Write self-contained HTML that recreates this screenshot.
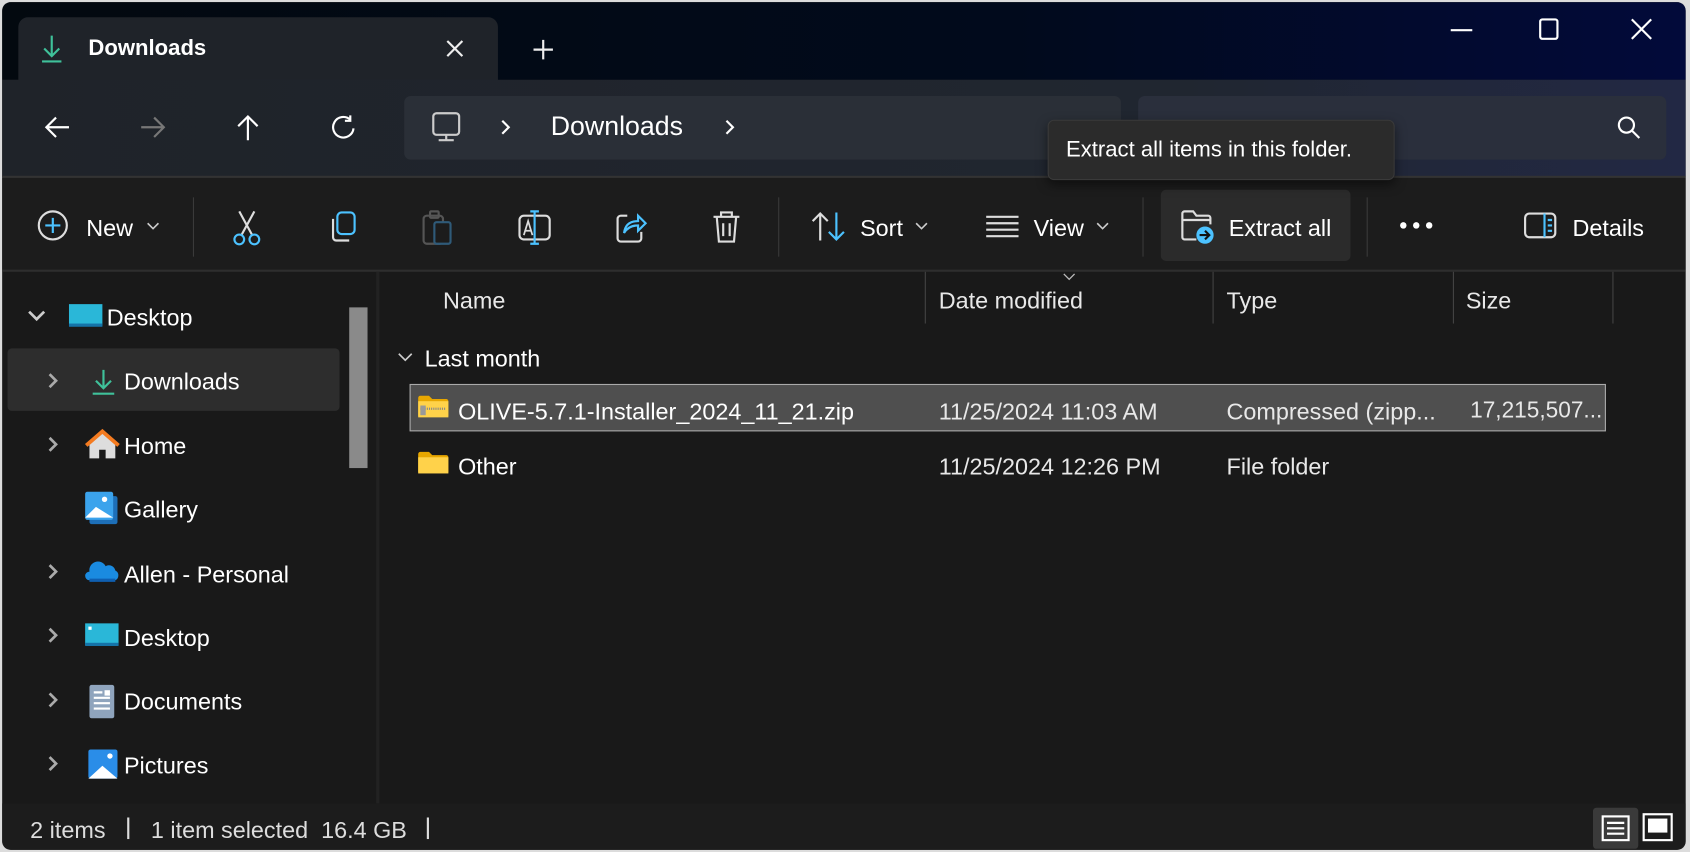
<!DOCTYPE html>
<html><head><meta charset="utf-8"><style>
*{margin:0;padding:0;box-sizing:border-box}
html,body{width:1690px;height:852px;overflow:hidden;background:#dcdcdc;font-family:"Liberation Sans",sans-serif;color:#fff}
#w{position:absolute;left:0;top:0;width:1568px;height:790px;transform:scale(1.07781,1.07848);transform-origin:0 0}
.a{position:absolute}
.t{position:absolute;font-size:21.7px;white-space:nowrap;color:#fff}
svg{position:absolute;overflow:visible}
</style></head><body><div id="w">
<div class="a" style="left:2px;top:2px;width:1562px;height:786px;border-radius:8px;background:#191919;overflow:hidden">
 <div class="a" style="left:0;top:0;width:1562px;height:72px;background:linear-gradient(90deg,#03090f,#010a1c 60%,#020a3a)"></div>
 <div class="a" style="left:15px;top:14px;width:445px;height:62px;background:#1f2329;border-radius:9px 9px 0 0"></div>
 <div class="a" style="left:0;top:72px;width:1562px;height:90px;background:linear-gradient(90deg,#1f2329,#202630 70%,#222844)"></div>
 <div class="a" style="left:373px;top:87px;width:665px;height:59px;background:#2a2f37;border-radius:6px"></div>
 <div class="a" style="left:1054px;top:87px;width:490px;height:59px;background:#2a2f3c;border-radius:6px"></div>
 <div class="a" style="left:0;top:161px;width:1562px;height:2px;background:#333"></div>
 <div class="a" style="left:0;top:163px;width:1562px;height:85px;background:#1c1c1c"></div>
 <div class="a" style="left:0;top:248px;width:1562px;height:2px;background:#2e2e2e"></div>
 <div class="a" style="left:347px;top:250px;width:3px;height:493px;background:#222"></div>
 <div class="a" style="left:5px;top:321px;width:308px;height:58px;background:#2d2d2d;border-radius:4px"></div>
 <div class="a" style="left:322px;top:283px;width:17px;height:149px;background:#8a8a8a"></div>
 <div class="a" style="left:0;top:743px;width:1562px;height:43px;background:#1c1c1c"></div>
 <div class="a" style="left:1075px;top:174px;width:176px;height:66px;background:#2b2b2b;border-radius:5px"></div>
 <div class="a" style="left:378px;top:354px;width:1110px;height:44px;background:#4f4f4f;border:1px solid #aaa"></div>
</div>
<!-- tab -->
<svg style="left:36px;top:31px" width="24" height="28"><path d="M12 2v19M5 14l7 7 7-7" stroke="#3fc19a" stroke-width="2" fill="none"/><path d="M3 26h18" stroke="#3fc19a" stroke-width="2"/></svg>
<div class="t" style="left:82px;top:33px;font-weight:600;font-size:20.5px">Downloads</div>
<svg style="left:413px;top:36px" width="18" height="18"><path d="M2 2l14 14M16 2L2 16" stroke="#eee" stroke-width="2"/></svg>
<svg style="left:494px;top:36px" width="20" height="20"><path d="M10 1v18M1 10h18" stroke="#eee" stroke-width="2"/></svg>
<svg style="left:1346px;top:26px" width="20" height="4"><path d="M0 2h20" stroke="#fff" stroke-width="2"/></svg>
<svg style="left:1428px;top:17px" width="18" height="20"><rect x="1" y="1" width="16" height="18" rx="2" stroke="#fff" stroke-width="2" fill="none"/></svg>
<svg style="left:1513px;top:17px" width="20" height="20"><path d="M1 1l18 18M19 1L1 19" stroke="#fff" stroke-width="2"/></svg>
<!-- nav -->
<svg style="left:40px;top:107px" width="26" height="22"><path d="M24 11H3M12 2L3 11l9 9" stroke="#fff" stroke-width="2" fill="none"/></svg>
<svg style="left:129px;top:107px" width="26" height="22"><path d="M2 11h21M14 2l9 9-9 9" stroke="#777" stroke-width="2" fill="none"/></svg>
<svg style="left:218px;top:105px" width="24" height="26"><path d="M12 25V3M3 12l9-9 9 9" stroke="#fff" stroke-width="2" fill="none"/></svg>
<svg style="left:307px;top:106px" width="24" height="24"><path d="M18 5A9.5 9.5 0 1 0 21 13" stroke="#fff" stroke-width="2" fill="none"/><path d="M18 1v5h-5" stroke="#fff" stroke-width="2" fill="none"/></svg>
<svg style="left:400px;top:103px" width="28" height="30"><rect x="2" y="2" width="24" height="20" rx="3" stroke="#ccc" stroke-width="2" fill="none"/><path d="M14 22v4M7 27h14" stroke="#ccc" stroke-width="2"/></svg>
<svg style="left:464px;top:110px" width="10" height="16"><path d="M2 2l6 6-6 6" stroke="#fff" stroke-width="2" fill="none"/></svg>
<div class="t" style="left:511px;top:104px;font-size:24.8px">Downloads</div>
<svg style="left:672px;top:110px" width="10" height="16"><path d="M2 2l6 6-6 6" stroke="#fff" stroke-width="2" fill="none"/></svg>
<svg style="left:1500px;top:107px" width="24" height="24"><circle cx="9" cy="9" r="7" stroke="#fff" stroke-width="2" fill="none"/><path d="M14 14l7 7" stroke="#fff" stroke-width="2"/></svg>
<!-- tooltip -->
<div class="a" style="left:972px;top:111px;width:322px;height:56px;background:#2b2b2b;border:1px solid #3a3a3a;border-radius:6px;box-shadow:0 4px 10px rgba(0,0,0,.5)"></div>
<div class="t" style="left:989px;top:127px;font-size:20.5px">Extract all items in this folder.</div>
<!-- toolbar -->
<svg style="left:35px;top:195px" width="30" height="30"><circle cx="14" cy="14" r="13" stroke="#ddd" stroke-width="2" fill="none"/><path d="M14 7v14M7 14h14" stroke="#4cc2ff" stroke-width="2"/></svg>
<div class="t" style="left:80px;top:199px">New</div>
<svg style="left:136px;top:206px" width="12" height="8"><path d="M1 1l5 5 5-5" stroke="#ccc" stroke-width="1.5" fill="none"/></svg>
<div class="a" style="left:179px;top:183px;width:1px;height:55px;background:#3a3a3a"></div>
<div class="a" style="left:722px;top:183px;width:1px;height:55px;background:#3a3a3a"></div>
<div class="a" style="left:1060px;top:183px;width:1px;height:55px;background:#3a3a3a"></div>
<div class="a" style="left:1268px;top:183px;width:1px;height:55px;background:#3a3a3a"></div>
<svg style="left:214px;top:194px" width="30" height="34"><path d="M8 2l12 22M22 2L10 24" stroke="#ddd" stroke-width="2"/><circle cx="8" cy="28" r="4.5" stroke="#4cc2ff" stroke-width="2" fill="none"/><circle cx="22" cy="28" r="4.5" stroke="#4cc2ff" stroke-width="2" fill="none"/></svg>
<svg style="left:303px;top:195px" width="30" height="32"><rect x="10" y="2" width="16" height="20" rx="4" stroke="#4cc2ff" stroke-width="2" fill="none"/><path d="M6 8v17a3 3 0 0 0 3 3h12" stroke="#ddd" stroke-width="2" fill="none"/></svg>
<svg style="left:391px;top:194px" width="30" height="34"><rect x="2" y="6" width="18" height="26" rx="3" stroke="#555" stroke-width="2" fill="none"/><rect x="8" y="2" width="8" height="6" rx="1" stroke="#555" stroke-width="2" fill="none"/><rect x="12" y="12" width="15" height="20" rx="2" stroke="#2f5a78" stroke-width="2" fill="#1c1c1c"/></svg>
<svg style="left:480px;top:194px" width="32" height="34"><rect x="2" y="6" width="28" height="22" rx="4" stroke="#ddd" stroke-width="2" fill="none"/><path d="M16 2v30M12 2h8M12 32h8" stroke="#4cc2ff" stroke-width="2"/><path d="M6 24l4-13 4 13M7 20h6" stroke="#ddd" stroke-width="1.6" fill="none"/></svg>
<svg style="left:570px;top:194px" width="32" height="34"><path d="M12 6H6a3 3 0 0 0-3 3v18a3 3 0 0 0 3 3h16a3 3 0 0 0 3-3v-6" stroke="#ddd" stroke-width="2" fill="none"/><path d="M9 22c1-8 6-11 13-11V6l7 7-7 7v-5c-6 0-10 2-13 7z" stroke="#4cc2ff" stroke-width="2" fill="none"/></svg>
<svg style="left:660px;top:194px" width="28" height="34"><path d="M2 7h24M9 7V3h10v4M5 7l2 23h14l2-23M11 13v12M17 13v12" stroke="#ddd" stroke-width="2" fill="none"/></svg>
<svg style="left:752px;top:195px" width="34" height="30"><path d="M9 28V3M2 10l7-7 7 7" stroke="#ddd" stroke-width="2" fill="none"/><path d="M24 2v25M17 20l7 7 7-7" stroke="#4cc2ff" stroke-width="2" fill="none"/></svg>
<div class="t" style="left:798px;top:199px">Sort</div>
<svg style="left:849px;top:206px" width="12" height="8"><path d="M1 1l5 5 5-5" stroke="#ccc" stroke-width="1.5" fill="none"/></svg>
<svg style="left:914px;top:199px" width="32" height="22"><path d="M1 2h30M1 8h30M1 14h30M1 20h30" stroke="#ddd" stroke-width="2"/></svg>
<div class="t" style="left:959px;top:199px">View</div>
<svg style="left:1017px;top:206px" width="12" height="8"><path d="M1 1l5 5 5-5" stroke="#ccc" stroke-width="1.5" fill="none"/></svg>
<svg style="left:1095px;top:194px" width="34" height="34"><path d="M15 28H4a2 2 0 0 1-2-2V4a2 2 0 0 1 2-2h8l3 4h11a2 2 0 0 1 2 2v6" stroke="#ddd" stroke-width="2" fill="none"/><path d="M2 10h26" stroke="#ddd" stroke-width="2"/><circle cx="23" cy="24" r="8" fill="#4cc2ff"/><path d="M18 24h9M23 20l4 4-4 4" stroke="#111" stroke-width="2" fill="none"/></svg>
<div class="t" style="left:1140px;top:199px">Extract all</div>
<svg style="left:1298px;top:205px" width="34" height="8"><circle cx="4" cy="4" r="3" fill="#fff"/><circle cx="16" cy="4" r="3" fill="#fff"/><circle cx="28" cy="4" r="3" fill="#fff"/></svg>
<svg style="left:1413px;top:196px" width="32" height="28"><rect x="2" y="2" width="28" height="22" rx="4" stroke="#ddd" stroke-width="2" fill="none"/><path d="M20 2v22M23 8h4M23 13h4M23 18h4" stroke="#4cc2ff" stroke-width="2"/></svg>
<div class="t" style="left:1459px;top:199px">Details</div>
<!-- headers -->
<div class="t" style="left:411px;top:266px;color:#e8e8e8">Name</div>
<div class="a" style="left:858px;top:252px;width:1px;height:48px;background:#444"></div>
<svg style="left:986px;top:253px" width="12" height="8"><path d="M1 1l5 5 5-5" stroke="#bbb" stroke-width="1.2" fill="none"/></svg>
<div class="t" style="left:871px;top:266px;color:#e8e8e8">Date modified</div>
<div class="a" style="left:1125px;top:252px;width:1px;height:48px;background:#444"></div>
<div class="t" style="left:1138px;top:266px;color:#e8e8e8">Type</div>
<div class="a" style="left:1348px;top:252px;width:1px;height:48px;background:#444"></div>
<div class="t" style="left:1360px;top:266px;color:#e8e8e8">Size</div>
<div class="a" style="left:1496px;top:252px;width:1px;height:48px;background:#444"></div>
<svg style="left:369px;top:327px" width="14" height="10"><path d="M1 1l6 6 6-6" stroke="#ccc" stroke-width="1.5" fill="none"/></svg>
<div class="t" style="left:394px;top:320px">Last month</div>
<svg style="left:388px;top:366px" width="28" height="22"><path d="M0 3a2 2 0 0 1 2-2h8l3 3h13a2 2 0 0 1 2 2v14H0z" fill="#e8a700"/><rect x="0" y="6" width="28" height="15" fill="#ffd24a"/><path d="M2 13h24" stroke="#888" stroke-width="2" stroke-dasharray="1 1"/><rect x="2" y="10" width="5" height="9" fill="#999"/></svg>
<div class="t" style="left:425px;top:369px">OLIVE-5.7.1-Installer_2024_11_21.zip</div>
<div class="t" style="left:871px;top:369px;color:#e8e8e8">11/25/2024 11:03 AM</div>
<div class="t" style="left:1138px;top:369px;color:#e8e8e8">Compressed (zipp...</div>
<div class="t" style="left:1364px;top:369px;color:#e8e8e8;font-size:21px">17,215,507...</div>
<svg style="left:388px;top:418px" width="28" height="22"><path d="M0 3a2 2 0 0 1 2-2h8l3 3h13a2 2 0 0 1 2 2v14H0z" fill="#e8a700"/><rect x="0" y="6" width="28" height="15" fill="#ffd24a"/></svg>
<div class="t" style="left:425px;top:420px">Other</div>
<div class="t" style="left:871px;top:420px;color:#e8e8e8">11/25/2024 12:26 PM</div>
<div class="t" style="left:1138px;top:420px;color:#e8e8e8">File folder</div>
<!-- sidebar -->
<svg style="left:26px;top:288px" width="16" height="10"><path d="M1 1l7 7 7-7" stroke="#ccc" stroke-width="2.5" fill="none"/></svg>
<svg style="left:64px;top:282px" width="32" height="26"><rect x="0" y="0" width="31" height="20" fill="#2ab7d8"/><rect x="0" y="18" width="31" height="3" fill="#1573a8"/></svg>
<div class="t" style="left:99px;top:282px">Desktop</div>
<svg style="left:44px;top:345px" width="10" height="16"><path d="M2 2l6 6-6 6" stroke="#aaa" stroke-width="2.5" fill="none"/></svg>
<svg style="left:84px;top:341px" width="24" height="26"><path d="M12 2v17M5 12l7 7 7-7" stroke="#3fc19a" stroke-width="2" fill="none"/><path d="M2 24h20" stroke="#3fc19a" stroke-width="2"/></svg>
<div class="t" style="left:115px;top:341px">Downloads</div>
<svg style="left:44px;top:404px" width="10" height="16"><path d="M2 2l6 6-6 6" stroke="#aaa" stroke-width="2.5" fill="none"/></svg>
<svg style="left:79px;top:398px" width="32" height="28"><path d="M4 14L16 3l12 11v13H19v-8h-6v8H4z" fill="#ddd"/><path d="M1 15L16 2l15 13" stroke="#f47b20" stroke-width="3.5" fill="none"/></svg>
<div class="t" style="left:115px;top:401px">Home</div>
<svg style="left:79px;top:456px" width="32" height="32"><rect x="4" y="4" width="26" height="26" rx="2" fill="#1d6fb8"/><rect x="0" y="0" width="26" height="26" rx="2" fill="#3ba3ec"/><path d="M0 24l10-10 16 10z" fill="#fff"/><circle cx="18" cy="7" r="2.5" fill="#fff"/></svg>
<div class="t" style="left:115px;top:460px">Gallery</div>
<svg style="left:44px;top:522px" width="10" height="16"><path d="M2 2l6 6-6 6" stroke="#aaa" stroke-width="2.5" fill="none"/></svg>
<svg style="left:79px;top:518px" width="32" height="22"><path d="M4 20a4 4 0 0 1 0-8 8 8 0 0 1 15-5 6 6 0 0 1 9 4 5 5 0 0 1 0 9z" fill="#1a8be0"/><path d="M4 20h24" stroke="#0f5fb0" stroke-width="3"/></svg>
<div class="t" style="left:115px;top:520px">Allen - Personal</div>
<svg style="left:44px;top:581px" width="10" height="16"><path d="M2 2l6 6-6 6" stroke="#aaa" stroke-width="2.5" fill="none"/></svg>
<svg style="left:79px;top:578px" width="32" height="26"><rect x="0" y="0" width="31" height="20" fill="#2ab7d8"/><rect x="0" y="18" width="31" height="3" fill="#1573a8"/><rect x="3" y="3" width="3" height="3" fill="#fff"/></svg>
<div class="t" style="left:115px;top:579px">Desktop</div>
<svg style="left:44px;top:641px" width="10" height="16"><path d="M2 2l6 6-6 6" stroke="#aaa" stroke-width="2.5" fill="none"/></svg>
<svg style="left:83px;top:635px" width="24" height="32"><rect x="0" y="0" width="23" height="31" rx="2" fill="#8fa4bd"/><path d="M4 7h8M4 12h15M4 17h15M4 22h15" stroke="#fff" stroke-width="2"/><rect x="14" y="5" width="5" height="5" fill="#fff"/></svg>
<div class="t" style="left:115px;top:638px">Documents</div>
<svg style="left:44px;top:700px" width="10" height="16"><path d="M2 2l6 6-6 6" stroke="#aaa" stroke-width="2.5" fill="none"/></svg>
<svg style="left:82px;top:695px" width="28" height="28"><rect x="0" y="0" width="27" height="27" rx="2" fill="#2a8de8"/><path d="M0 27l13-12 14 12z" fill="#fff"/><circle cx="20" cy="6" r="2.5" fill="#fff"/></svg>
<div class="t" style="left:115px;top:697px">Pictures</div>
<!-- status -->
<div class="t" style="left:28px;top:757px;color:#ddd">2 items</div>
<div class="a" style="left:118px;top:758px;width:2px;height:20px;background:#ddd"></div>
<div class="t" style="left:140px;top:757px;color:#ddd">1 item selected&nbsp; 16.4 GB</div>
<div class="a" style="left:396px;top:758px;width:2px;height:20px;background:#ddd"></div>
<div class="a" style="left:1478px;top:749px;width:42px;height:38px;background:#3a3a3a;border-radius:3px"></div>
<svg style="left:1486px;top:756px" width="26" height="24"><rect x="1" y="1" width="24" height="22" stroke="#fff" stroke-width="2" fill="none"/><path d="M5 7h16M5 12h16M5 17h16" stroke="#fff" stroke-width="2"/></svg>
<svg style="left:1524px;top:754px" width="28" height="26"><rect x="1" y="1" width="26" height="24" stroke="#fff" stroke-width="2" fill="none"/><rect x="5" y="5" width="18" height="13" fill="#fff"/></svg>
</div></body></html>
